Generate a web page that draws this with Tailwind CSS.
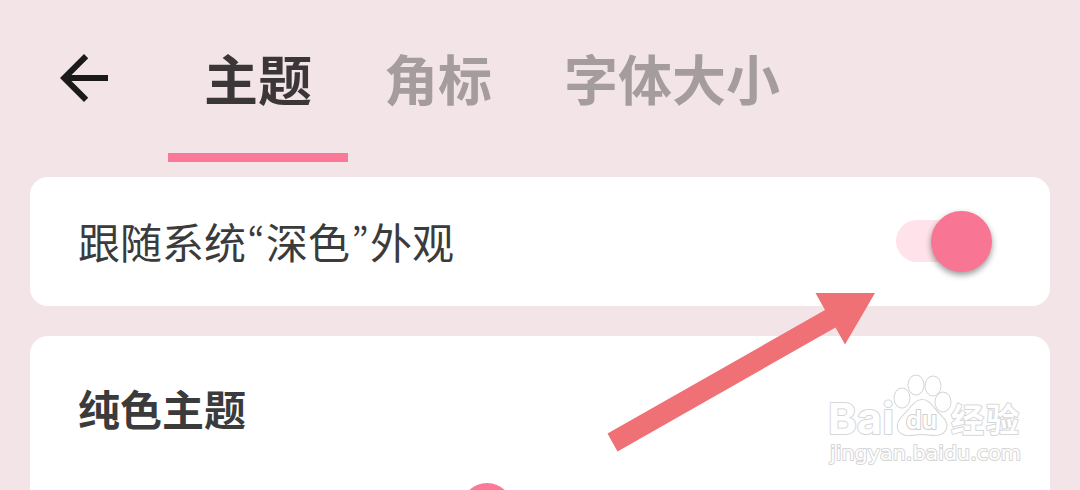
<!DOCTYPE html>
<html lang="zh-CN">
<head>
    <meta charset="UTF-8">
    <meta name="viewport" content="width=device-width, initial-scale=1.0">
    <title>主题</title>
    <script src="https://cdn.jsdelivr.net/npm/@tailwindcss/browser@4"></script>
</head>
<body class="relative h-[490px] overflow-hidden bg-[#f3e4e7] font-['Noto_Sans_CJK_SC',sans-serif] text-[#3b3b3b]">
    <header class="flex h-[162px] pl-12">
        <button class="mt-[42px] size-[72px]" aria-label="返回">
            <svg class="size-[72px]" viewBox="0 0 24 24" fill="#1a1a1a">
                <path d="M20 11H7.83l5.59-5.59L12 4l-8 8 8 8 1.41-1.41L7.83 13H20z"/>
            </svg>
        </button>
        <nav class="ml-12 flex text-[54px] leading-[156px] font-bold text-[#a59c9d]">
            <a class="h-[162px] border-b-9 border-[#fb7998] px-9 text-[#3b3738]">主题</a>
            <a class="px-9">角标</a>
            <a class="px-9">字体大小</a>
        </nav>
    </header>

    <main class="mt-[15px] flex h-[313px] flex-col gap-[30px] px-[30px]">
        <section class="flex h-[129px] shrink-0 items-center justify-between rounded-[18px] bg-white pr-[58px] pl-12">
            <div class="mb-0.5 flex text-[42px] leading-[60px] [font-feature-settings:'pwid']">
                <span>跟随系统</span>
                <span class="w-5 text-center text-[36px]">“</span>
                <span>深色</span>
                <span class="w-5 text-center text-[36px]">”</span>
                <span>外观</span>
            </div>
            <div class="mb-px flex h-[42px] w-24 items-center">
                <div class="h-[42px] w-[78px] rounded-full bg-[#ffe2ea]"></div>
                <div class="-ml-[43px] size-[61px] shrink-0 rounded-full bg-[#f87693] shadow-[0_3px_6px_rgba(0,0,0,0.4)]"></div>
            </div>
        </section>

        <section class="min-h-0 flex-1 overflow-hidden rounded-t-[18px] bg-white px-12 pt-[42px]">
            <h2 class="text-[42px] leading-[60px] font-bold">纯色主题</h2>
            <div class="mt-[45px] ml-[383px] h-[7px] w-13 overflow-hidden">
                <div class="size-13 rounded-full bg-[#fb7998]"></div>
            </div>
        </section>
    </main>

    <!-- arrow pointing at the switch -->
    <svg class="absolute inset-0" width="1080" height="490" viewBox="0 0 1080 490">
        <path d="M607.5 433.5L825 310L815.5 293H875L845 344.500L835.500 327.500L617.500 451.500Z" fill="#ef7075"/>
    </svg>

    <!-- watermark -->
    <svg class="absolute top-[365px] left-[815px]" width="220" height="110" viewBox="0 0 220 110" fill="#fff" stroke="#d6d6d6" stroke-width="2" paint-order="stroke" stroke-linejoin="round">
        <text x="13" y="69" font-family="Inter, sans-serif" font-size="43" font-weight="700" textLength="66" lengthAdjust="spacingAndGlyphs">Bai</text>
        <ellipse cx="87" cy="33" rx="7.500" ry="9.500"/>
        <ellipse cx="101" cy="20" rx="7.500" ry="9.500"/>
        <ellipse cx="118" cy="21" rx="7.500" ry="9.500"/>
        <ellipse cx="128" cy="37" rx="7.500" ry="9.500"/>
        <path d="M107 35C115 35 118 43 126 51C136 60 131 70 120 70C115 70 112 69 107 69C102 69 99 70 94 70C82 70 79 60 88 51C96 44 99 35 107 35Z"/>
        <text x="91" y="64" font-family="Inter, sans-serif" font-size="25" font-weight="600" stroke="#cfcfcf" textLength="31" lengthAdjust="spacingAndGlyphs">du</text>
        <text x="136" y="67" font-family="Noto Sans CJK SC, sans-serif" font-size="33" font-weight="700" textLength="68">经验</text>
        <text x="15" y="95" font-family="DejaVu Sans, sans-serif" font-size="20" textLength="191" lengthAdjust="spacingAndGlyphs">jingyan.baidu.com</text>
    </svg>
</body>
</html>
